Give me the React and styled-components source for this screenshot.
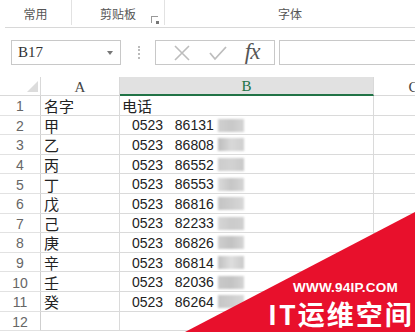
import React from 'react';
import styled, { createGlobalStyle } from 'styled-components';

const Global = createGlobalStyle`
  html, body { margin: 0; padding: 0; background: #fff; }
  body { font-family: "Liberation Sans", "Noto Sans CJK SC", sans-serif; }
`;

const Page = styled.div`
  position: relative;
  width: 415px;
  height: 332px;
  overflow: hidden;
  background: #fff;
`;

const Ribbon = styled.div`
  display: flex;
  height: 27px;
`;

const Group = styled.div`
  display: flex;
  align-items: center;
  justify-content: center;
  position: relative;
  width: ${p => p.w ? p.w + 'px' : 'auto'};
  flex: ${p => p.w ? 'none' : 1};
  height: 25px;
  padding-top: 2px;
  box-sizing: border-box;
  border-right: ${p => p.last ? 'none' : '1px solid #e2e2e2'};
  font-family: "Noto Sans CJK SC", sans-serif;
  font-size: 12px;
  color: #555;
`;

const Launcher = styled.span`
  position: absolute;
  right: 6px;
  bottom: 2px;
  width: 6px;
  height: 6px;
  border-left: 1px solid #999;
  border-top: 1px solid #999;
  &::after {
    content: '';
    position: absolute;
    right: -1px;
    bottom: -1px;
    width: 3px;
    height: 3px;
    background: #777;
  }
`;

const RibbonLine = styled.div`
  margin-left: 5px;
  height: 1px;
  background: #d8d8d8;
`;

const FormulaBar = styled.div`
  display: flex;
  align-items: center;
  height: 25px;
  margin-top: 12px;
`;

const NameBox = styled.div`
  display: flex;
  align-items: center;
  justify-content: space-between;
  box-sizing: border-box;
  width: 110px;
  height: 25px;
  margin-left: 11px;
  padding: 0 7px 0 6px;
  border: 1px solid #c8c8c8;
  font-family: "Liberation Serif", serif;
  font-size: 15px;
  color: #333;
`;

const Caret = styled.span`
  width: 0;
  height: 0;
  border-left: 3px solid transparent;
  border-right: 3px solid transparent;
  border-top: 4px solid #777;
`;

const Dots = styled.div`
  width: 0;
  height: 13px;
  margin: 0 15px 0 17px;
  border-left: 2px dotted #bbb;
`;

const FxBox = styled.div`
  display: flex;
  align-items: center;
  justify-content: space-around;
  box-sizing: border-box;
  width: 120px;
  height: 25px;
  padding: 0 6px 0 8px;
  border: 1px solid #c8c8c8;
`;

const Fx = styled.span`
  font-family: "Liberation Serif", serif;
  font-style: italic;
  font-size: 23px;
  color: #555;
  letter-spacing: -1px;
  line-height: 1;
  margin-top: -2px;
`;

const Input = styled.div`
  flex: 1;
  height: 25px;
  margin-left: 4px;
  box-sizing: border-box;
  border: 1px solid #c8c8c8;
  border-right: none;
`;

const Sheet = styled.div`
  display: grid;
  grid-template-columns: 41px 79px 254px 80px;
  grid-template-rows: 19px repeat(12, 19.6px);
  margin-top: 12px;
`;

const Head = styled.div`
  display: flex;
  align-items: center;
  justify-content: center;
  box-sizing: border-box;
  position: relative;
  border-right: 1px solid #d9d9d9;
  border-bottom: ${p => p.active ? '2px solid #217346' : '1px solid #d9d9d9'};
  background: ${p => p.active ? '#e1e1e1' : '#fff'};
  color: ${p => p.active ? '#217346' : '#444'};
  font-family: "Liberation Serif", serif;
  font-size: 15px;
  padding-top: 2px;
`;

const Corner = styled.span`
  position: absolute;
  right: 2px;
  bottom: 3px;
  width: 0;
  height: 0;
  border-left: 11px solid transparent;
  border-bottom: 11px solid #dcdcdc;
`;

const RowNum = styled.div`
  display: flex;
  align-items: center;
  justify-content: center;
  box-sizing: border-box;
  border-right: 1px solid #cfcfcf;
  border-bottom: 1px solid #e2e2e2;
  color: #666;
  font-size: 14px;
  padding-top: 2px;
`;

const Cell = styled.div`
  display: flex;
  align-items: center;
  box-sizing: border-box;
  border-right: 1px solid #dadada;
  border-bottom: 1px solid #dadada;
  padding-left: ${p => p.pad || 3}px;
  padding-top: 1px;
  color: #222;
  font-family: ${p => p.num ? '"Liberation Sans", sans-serif' : '"Noto Sans CJK SC", sans-serif'};
  font-size: ${p => p.num ? 14 : 15}px;
  white-space: pre;
  overflow: hidden;
`;

const Blur = styled.span`
  display: inline-block;
  width: 26px;
  height: 13px;
  margin-left: 4px;
  filter: blur(1.2px);
`;

const Mark = styled.div`
  position: absolute;
  right: 0;
  bottom: 0;
  width: 230px;
  height: 120px;
  background: #e8102c;
  clip-path: polygon(100% 0, 100% 100%, 0 100%);
`;

const MarkUrl = styled.div`
  position: absolute;
  left: 293px;
  top: 281px;
  color: #fff;
  font-family: "Liberation Sans", sans-serif;
  font-weight: 700;
  font-size: 13.5px;
  line-height: 14px;
  letter-spacing: 0.2px;
`;

const MarkTitle = styled.div`
  position: absolute;
  left: 268px;
  top: 299px;
  color: #fff;
  font-family: "Noto Sans CJK SC", sans-serif;
  font-weight: 700;
  font-size: 27px;
  line-height: 30px;
  letter-spacing: 2px;
`;

const people = [
  ['甲', '86131', ['#d0d0d0', '#c8c8c8', '#d4d4d4']],
  ['乙', '86808', ['#bdbdbd', '#d8d8d8', '#cfcfcf']],
  ['丙', '86552', ['#cccccc', '#d2d2d2', '#c9c9c9']],
  ['丁', '86553', ['#dadada', '#c6c6c6', '#d5d5d5']],
  ['戊', '86816', ['#c4c4c4', '#cdcdcd', '#d8d8d8']],
  ['己', '82233', ['#d6d6d6', '#cbcbcb', '#d0d0d0']],
  ['庚', '86826', ['#cfcfcf', '#c2c2c2', '#d6d6d6']],
  ['辛', '86814', ['#c0c0c0', '#dedede', '#cacaca']],
  ['壬', '82036', ['#c9c9c9', '#c3c3c3', '#d4d4d4']],
  ['癸', '86264', ['#c6c6c6', '#cecece', '#d9d9d9']],
];

const Cross = () => (
  <svg width="18" height="18" viewBox="0 0 18 18">
    <path d="M2 2 L16 16 M16 2 L2 16" stroke="#bdbdbd" strokeWidth="1.6" fill="none" />
  </svg>
);

const Check = () => (
  <svg width="20" height="18" viewBox="0 0 20 18">
    <path d="M2 9 L7 15 L18 3" stroke="#bdbdbd" strokeWidth="1.8" fill="none" />
  </svg>
);

export default function App() {
  return (
    <Page>
      <Global />
      <Ribbon>
        <Group w={72}>常用</Group>
        <Group w={93}>剪贴板<Launcher /></Group>
        <Group last>字体</Group>
      </Ribbon>
      <RibbonLine />
      <FormulaBar>
        <NameBox>B17<Caret /></NameBox>
        <Dots />
        <FxBox>
          <Cross />
          <Check />
          <Fx>fx</Fx>
        </FxBox>
        <Input />
      </FormulaBar>
      <Sheet>
        <Head><Corner /></Head>
        <Head>A</Head>
        <Head active>B</Head>
        <Head>C</Head>

        <RowNum>1</RowNum>
        <Cell>名字</Cell>
        <Cell pad={2}>电话</Cell>
        <Cell />

        {people.map(([name, num, shades], i) => (
          <React.Fragment key={name}>
            <RowNum>{i + 2}</RowNum>
            <Cell>{name}</Cell>
            <Cell num pad={12}>
              {'0523   ' + num}
              <Blur style={{ background: `linear-gradient(90deg, ${shades[0]}, ${shades[1]} 50%, ${shades[2]})` }} />
            </Cell>
            <Cell />
          </React.Fragment>
        ))}

        <RowNum>12</RowNum>
        <Cell />
        <Cell />
        <Cell />
      </Sheet>
      <Mark />
      <MarkUrl>WWW.94IP.COM</MarkUrl>
      <MarkTitle>IT运维空间</MarkTitle>
    </Page>
  );
}
